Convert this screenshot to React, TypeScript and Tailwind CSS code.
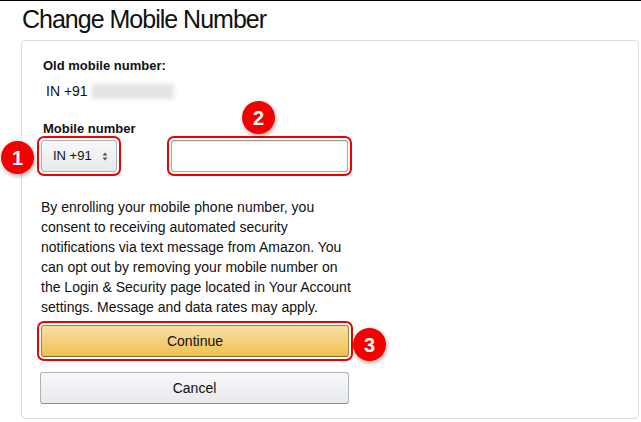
import React from 'react';

function Badge({ n, className }: { n: number; className: string }) {
  return (
    <div
      className={`absolute w-[33px] h-[33px] rounded-full bg-[#f40000] text-white flex items-center justify-center text-[20px] font-bold shadow-[1px_2px_4px_rgba(0,0,0,0.35)] ${className}`}
    >
      {n}
    </div>
  );
}

export default function App() {
  return (
    <div
      className="w-[641px] h-[422px] bg-white border-t border-black text-[#111] overflow-hidden"
      style={{ fontFamily: '"Liberation Sans", Arial, sans-serif' }}
    >
      <h1 className="ml-[22px] mt-[3px] text-[25px] leading-[30px] tracking-[-1px] font-normal">
        Change Mobile Number
      </h1>

      <div className="ml-[21px] mr-[2px] mt-[6px] border border-[#dddddd] rounded-[4px] pl-[19px] pt-[15px] pb-[14px]">
        <div className="w-[308px]">
          <div className="text-[13px] leading-[19px] font-bold ml-[2px]">Old mobile number:</div>
          <div className="mt-[6px] flex items-center text-[14px] leading-[20px] ml-[5px]">
            <span>IN +91</span>
            <div className="ml-[4px] w-[82px] h-[15px] bg-[#e4e4e4] blur-[2px]" />
          </div>

          <div className="mt-[18px] text-[13px] leading-[19px] font-bold ml-[2px]">Mobile number</div>
          <div className="mt-[2px] flex items-center gap-[54px]">
            <div className="relative w-[76px] h-[32px] rounded-[3px] border border-[#adb1b8] bg-gradient-to-b from-[#f7f8fa] to-[#e7e9ec] outline-2 outline-[#f20000] outline-offset-2 flex items-center pl-[11px] text-[13px]">
              <span>IN +91</span>
              <svg width="6" height="9" viewBox="0 0 6 9" className="ml-[10px]">
                <path d="M3 0.5 L5.5 3.5 H0.5 Z" fill="#555" />
                <path d="M3 8.5 L5.5 5.5 H0.5 Z" fill="#555" />
              </svg>
              <Badge n={1} className="left-[-41px] top-0" />
            </div>
            <div className="relative w-[177px] h-[32px] rounded-[3px] border border-[#a6a6a6] border-t-[#949494] bg-white shadow-[inset_0_1px_0_rgba(0,0,0,0.08)] outline-2 outline-[#f20000] outline-offset-2">
              <Badge n={2} className="left-[70px] top-[-40px]" />
            </div>
          </div>

          <p className="mt-[25px] text-[14px] leading-[20px] whitespace-nowrap">
            By enrolling your mobile phone number, you
            <br />
            consent to receiving automated security
            <br />
            notifications via text message from Amazon. You
            <br />
            can opt out by removing your mobile number on
            <br />
            the Login &amp; Security page located in Your Account
            <br />
            settings. Message and data rates may apply.
          </p>

          <button className="relative mt-[8px] w-[308px] h-[32px] rounded-[3px] border border-[#a88734] border-b-[#846a29] bg-gradient-to-b from-[#f7dfa5] to-[#f0c14b] text-[14px] text-[#111] outline-2 outline-[#f20000] outline-offset-2">
            Continue
            <Badge n={3} className="left-[calc(100%+5px)] top-[2px]" />
          </button>

          <button className="mt-[15px] -ml-px w-[309px] h-[32px] rounded-[3px] border border-[#adb1b8] border-b-[#8d9096] bg-gradient-to-b from-[#f7f8fa] to-[#e7e9ec] text-[14px] text-[#111]">
            Cancel
          </button>
        </div>
      </div>
    </div>
  );
}
